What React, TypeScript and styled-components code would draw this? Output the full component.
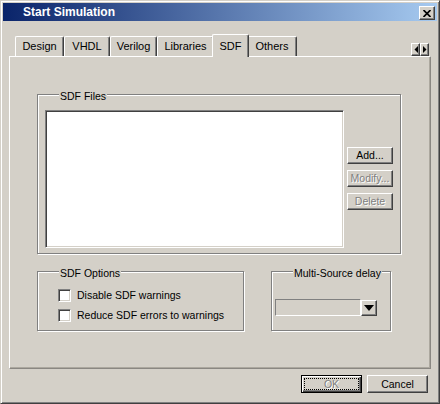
import React from 'react';
import styled, { createGlobalStyle, css } from 'styled-components';

const Global = createGlobalStyle`
  html, body { margin: 0; padding: 0; background: #d4d0c8; }
  body {
    font-family: "Liberation Sans", Arial, sans-serif;
    font-size: 10.5px;
    color: #000;
  }
  * { box-sizing: border-box; }
`;

const raised = css`
  background: #d4d0c8;
  border: 1px solid;
  border-color: #fff #404040 #404040 #fff;
  box-shadow: inset -1px -1px #808080;
`;

const Window = styled.div`
  width: 440px;
  height: 404px;
  background: #d4d0c8;
  border: 1px solid;
  border-color: #d4d0c8 #404040 #404040 #d4d0c8;
  box-shadow: inset 1px 1px #fff, inset -1px -1px #808080;
  padding: 2px;
  display: flex;
  flex-direction: column;
`;

const TitleBar = styled.div`
  height: 18px;
  flex: none;
  display: flex;
  align-items: flex-start;
  background: linear-gradient(to right, #0a246a, #a6caf0);
  color: #fff;
  font-weight: bold;
  font-size: 12px;
  line-height: 18px;
  padding: 0 2px 0 20px;
`;

const TitleText = styled.span`
  flex: 1;
  white-space: nowrap;
`;

const CloseButton = styled.div`
  ${raised};
  width: 16px;
  height: 14px;
  margin-top: 3px;
  display: flex;
  align-items: center;
  justify-content: center;
`;

const Body = styled.div`
  flex: 1;
  display: flex;
  flex-direction: column;
  padding: 13px 6px 0 6px;
`;

const TabRow = styled.div`
  height: 22px;
  display: flex;
  align-items: flex-end;
  padding: 0 2px 0 6px;
`;

const Tab = styled.div<{ $w: number; $active?: boolean }>`
  position: relative;
  width: ${(p) => p.$w + (p.$active ? 4 : 0)}px;
  height: ${(p) => (p.$active ? 23 : 20)}px;
  margin: ${(p) => (p.$active ? '0 -2px -1px -2px' : '0')};
  z-index: ${(p) => (p.$active ? 2 : 1)};
  padding-top: ${(p) => (p.$active ? 5 : 3)}px;
  background: #d4d0c8;
  border-left: 1px solid #fff;
  border-top: 1px solid #fff;
  border-right: 1px solid #404040;
  border-radius: 2px 2px 0 0;
  box-shadow: inset -1px 0 #808080;
  text-align: center;
  font-size: 11px;
  line-height: 13px;
  white-space: nowrap;
`;

const ScrollArrows = styled.div`
  margin-left: auto;
  display: flex;
`;

const ArrowButton = styled.div`
  ${raised};
  width: 9px;
  height: 13px;
  display: flex;
  align-items: center;
  justify-content: center;
`;

const Panel = styled.div`
  height: 313px;
  flex: none;
  border: 1px solid;
  border-color: #fff #8a8782 #8a8782 #fff;
  box-shadow: inset -1px -1px #aca89f;
  padding: 37px 0 0 27px;
  display: flex;
  flex-direction: column;
`;

const Group = styled.div<{ $w: number; $h: number }>`
  position: relative;
  width: ${(p) => p.$w}px;
  height: ${(p) => p.$h}px;
  flex: none;
  border: 1px solid #808080;
  box-shadow: inset 1px 1px #fff, 1px 1px #fff;
`;

const GroupLabel = styled.span`
  position: absolute;
  top: -5px;
  left: 21px;
  padding: 0 1px;
  background: #d4d0c8;
  line-height: 13px;
  white-space: nowrap;
`;

const FilesContent = styled.div`
  display: flex;
  padding: 15px 0 0 7px;
`;

const ListBox = styled.div`
  width: 299px;
  height: 138px;
  background: #fff;
  border: 1px solid;
  border-color: #808080 #fff #fff #808080;
  box-shadow: inset 1px 1px #404040, inset -1px -1px #d4d0c8;
`;

const ButtonColumn = styled.div`
  display: flex;
  flex-direction: column;
  gap: 6px;
  margin-left: 3px;
  padding-top: 37px;
`;

const PushButton = styled.div<{ $w: number; $h: number; $disabled?: boolean; $default?: boolean }>`
  ${raised};
  width: ${(p) => p.$w}px;
  height: ${(p) => p.$h}px;
  display: flex;
  align-items: center;
  justify-content: center;
  line-height: 13px;
  white-space: nowrap;
  color: ${(p) => (p.$disabled ? '#808080' : '#000')};
  text-shadow: ${(p) => (p.$disabled ? '1px 1px #fff' : 'none')};
  ${(p) =>
    p.$default &&
    css`
      border-color: #000;
      box-shadow: inset 1px 1px #fff, inset -1px -1px #404040, inset -2px -2px #808080;
      outline: 1px dotted #000;
      outline-offset: -4px;
    `}
`;

const BottomRow = styled.div`
  display: flex;
  margin-top: 17px;
`;

const OptionsContent = styled.div`
  display: flex;
  flex-direction: column;
  gap: 7px;
  padding: 17px 0 0 20px;
`;

const CheckRow = styled.label`
  display: flex;
  align-items: center;
  gap: 6px;
  height: 13px;
  line-height: 13px;
  white-space: nowrap;
`;

const CheckBox = styled.span`
  width: 13px;
  height: 13px;
  flex: none;
  background: #fff;
  border: 1px solid;
  border-color: #808080 #fff #fff #808080;
  box-shadow: inset 1px 1px #404040, inset -1px -1px #d4d0c8;
`;

const MultiGroupSpacer = styled.div`
  margin-left: 27px;
`;

const ComboContent = styled.div`
  display: flex;
  align-items: flex-start;
  padding: 27px 0 0 3px;
`;

const ComboField = styled.div`
  width: 86px;
  height: 17px;
  background: #d4d0c8;
  border: 1px solid;
  border-color: #808080 #fff #fff #808080;
`;

const ComboButton = styled.div`
  ${raised};
  width: 16px;
  height: 16px;
  margin-top: 1px;
  display: flex;
  align-items: center;
  justify-content: center;
`;

const Footer = styled.div`
  display: flex;
  justify-content: flex-end;
  gap: 5px;
  margin-top: 6px;
  padding-right: 3px;
`;

const tabs = [
  { label: 'Design', w: 49 },
  { label: 'VHDL', w: 46 },
  { label: 'Verilog', w: 47 },
  { label: 'Libraries', w: 57 },
  { label: 'SDF', w: 33, active: true },
  { label: 'Others', w: 50 },
];

export default function App() {
  return (
    <>
      <Global />
      <Window>
        <TitleBar>
          <TitleText>Start Simulation</TitleText>
          <CloseButton>
            <svg width="8" height="7" viewBox="0 0 8 7">
              <path d="M0.5 0 L7.5 7 M7.5 0 L0.5 7" stroke="#000" strokeWidth="1.7" />
            </svg>
          </CloseButton>
        </TitleBar>
        <Body>
          <TabRow>
            {tabs.map((t) => (
              <Tab key={t.label} $w={t.w} $active={t.active}>
                {t.label}
              </Tab>
            ))}
            <ScrollArrows>
              <ArrowButton>
                <svg width="4" height="7" viewBox="0 0 4 7">
                  <path d="M4 0 L0.5 3.5 L4 7 Z" fill="#000" />
                </svg>
              </ArrowButton>
              <ArrowButton>
                <svg width="4" height="7" viewBox="0 0 4 7">
                  <path d="M0 0 L3.5 3.5 L0 7 Z" fill="#000" />
                </svg>
              </ArrowButton>
            </ScrollArrows>
          </TabRow>
          <Panel>
            <Group $w={364} $h={160}>
              <GroupLabel>SDF Files</GroupLabel>
              <FilesContent>
                <ListBox />
                <ButtonColumn>
                  <PushButton $w={46} $h={17}>Add...</PushButton>
                  <PushButton $w={46} $h={17} $disabled>Modify...</PushButton>
                  <PushButton $w={46} $h={17} $disabled>Delete</PushButton>
                </ButtonColumn>
              </FilesContent>
            </Group>
            <BottomRow>
              <Group $w={207} $h={60}>
                <GroupLabel>SDF Options</GroupLabel>
                <OptionsContent>
                  <CheckRow>
                    <CheckBox />
                    Disable SDF warnings
                  </CheckRow>
                  <CheckRow>
                    <CheckBox />
                    Reduce SDF errors to warnings
                  </CheckRow>
                </OptionsContent>
              </Group>
              <MultiGroupSpacer>
                <Group $w={120} $h={60}>
                  <GroupLabel>Multi-Source delay</GroupLabel>
                  <ComboContent>
                    <ComboField />
                    <ComboButton>
                      <svg width="10" height="6" viewBox="0 0 10 6">
                        <path d="M0 0 H10 L5 6 Z" fill="#000" />
                      </svg>
                    </ComboButton>
                  </ComboContent>
                </Group>
              </MultiGroupSpacer>
            </BottomRow>
          </Panel>
          <Footer>
            <PushButton $w={61} $h={18} $disabled $default>OK</PushButton>
            <PushButton $w={61} $h={18}>Cancel</PushButton>
          </Footer>
        </Body>
      </Window>
    </>
  );
}
